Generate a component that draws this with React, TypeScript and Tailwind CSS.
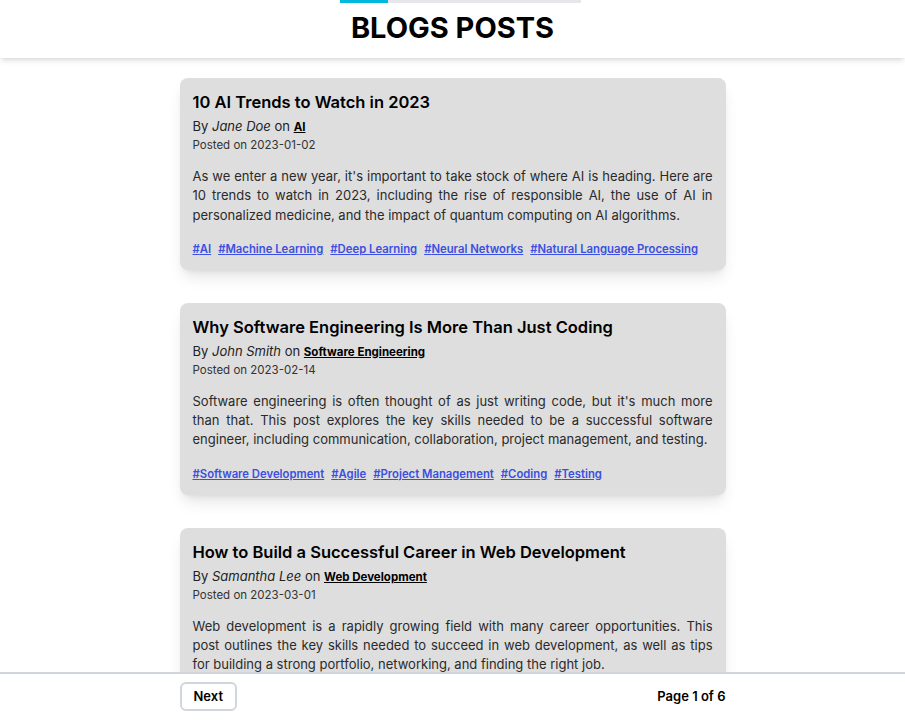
const posts = [
  {
    title: "10 AI Trends to Watch in 2023",
    author: "Jane Doe",
    category: "AI",
    date: "2023-01-02",
    text: "As we enter a new year, it's important to take stock of where AI is heading. Here are 10 trends to watch in 2023, including the rise of responsible AI, the use of AI in personalized medicine, and the impact of quantum computing on AI algorithms.",
    tags: ["AI", "Machine Learning", "Deep Learning", "Neural Networks", "Natural Language Processing"],
  },
  {
    title: "Why Software Engineering Is More Than Just Coding",
    author: "John Smith",
    category: "Software Engineering",
    date: "2023-02-14",
    text: "Software engineering is often thought of as just writing code, but it's much more than that. This post explores the key skills needed to be a successful software engineer, including communication, collaboration, project management, and testing.",
    tags: ["Software Development", "Agile", "Project Management", "Coding", "Testing"],
  },
  {
    title: "How to Build a Successful Career in Web Development",
    author: "Samantha Lee",
    category: "Web Development",
    date: "2023-03-01",
    text: "Web development is a rapidly growing field with many career opportunities. This post outlines the key skills needed to succeed in web development, as well as tips for building a strong portfolio, networking, and finding the right job.",
    tags: ["Web Development", "Career", "Portfolio", "Networking", "Jobs"],
  },
];

export default function App() {
  return (
    <div className="flex h-screen flex-col bg-white font-['Inter',sans-serif] text-[#111]">
      <header className="relative z-10 h-[58px] shrink-0 bg-white shadow-md">
        <div className="ml-[340px] flex h-[3px] w-[241px] bg-gray-200">
          <div className="w-[48px] bg-cyan-500" />
        </div>
        <h1 className="mt-[7px] text-center text-[29px] leading-9 font-bold text-black">BLOGS POSTS</h1>
      </header>

      <main className="flex-1 overflow-hidden">
        <div className="mx-auto flex w-[546px] flex-col gap-[33px] pt-5 pb-8">
          {posts.map((p) => (
            <article key={p.title} className="rounded-lg bg-[#dedede] px-[13px] pt-2.5 pb-[13px] shadow-lg">
              <h2 className="text-[16.5px] leading-7 font-semibold text-black">{p.title}</h2>
              <div className="text-[13px] leading-5 text-[#222]">
                By <em>{p.author}</em> on{" "}
                <a href="#" className="text-[11.5px] font-bold text-black underline">
                  {p.category}
                </a>
              </div>
              <div className="text-[11.5px] leading-4 text-[#333]">Posted on {p.date}</div>
              <p className="mt-3.5 text-justify text-[13px] leading-[19.25px] text-[#2a2a2a]">{p.text}</p>
              <div className="mt-4 flex flex-wrap gap-x-[7px] text-[11.3px] leading-4 font-semibold">
                {p.tags.map((t) => (
                  <a key={t} href="#" className="text-[#3b4fe0] underline">
                    #{t}
                  </a>
                ))}
              </div>
            </article>
          ))}
        </div>
      </main>

      <footer className="h-12 shrink-0 border-t-2 border-gray-300 bg-white">
        <div className="mx-auto flex w-[546px] items-center justify-between pt-2">
          <button className="h-[29px] rounded-md border-2 border-gray-300 px-3 text-[13px] font-semibold text-black">
            Next
          </button>
          <span className="text-[13px] font-semibold text-black">Page 1 of 6</span>
        </div>
      </footer>
    </div>
  );
}
